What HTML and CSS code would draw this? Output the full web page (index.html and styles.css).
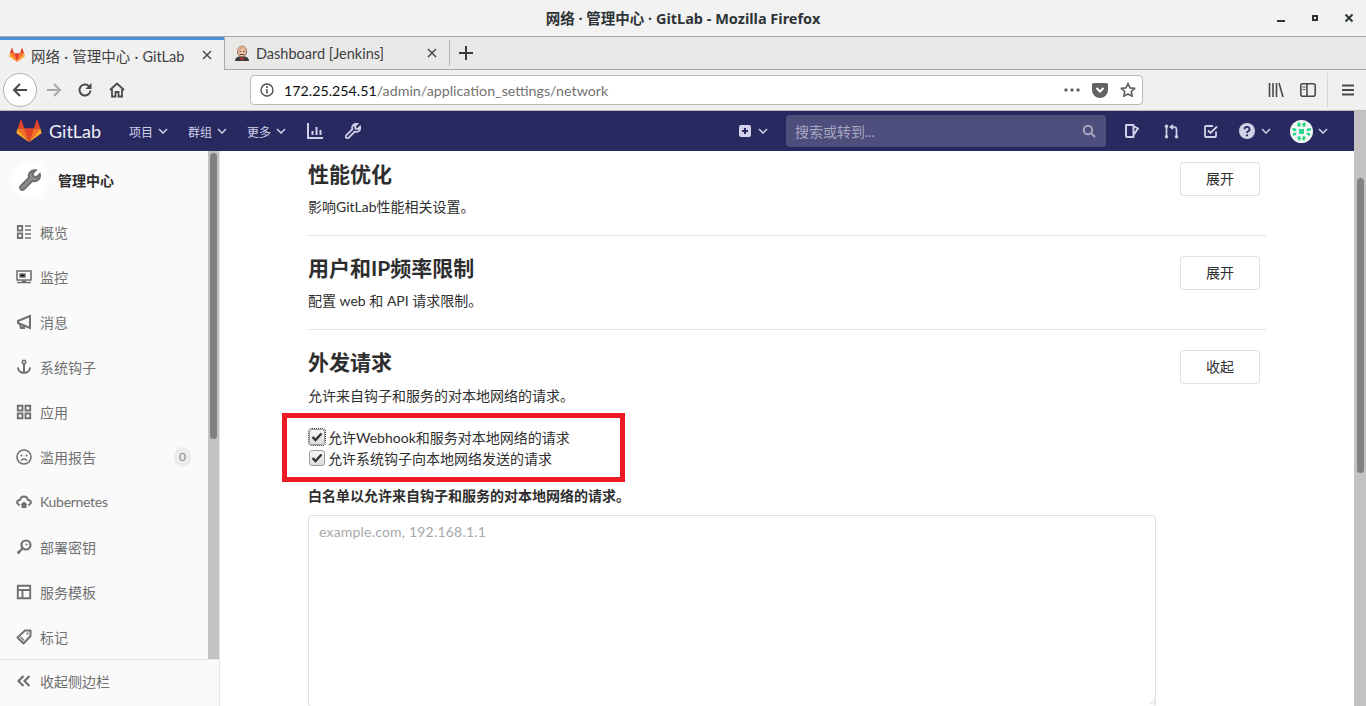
FILE: index.html
```html
<!DOCTYPE html>
<html lang="zh-CN">
<head>
    <meta charset="UTF-8">
    <title>网络 · 管理中心 · GitLab - Mozilla Firefox</title>
    <link rel="stylesheet" href="styles.css">
</head>
<body>
    <svg class="defs" width="0" height="0">
        <defs>
            <g id="tanuki">
                <path d="M18 33L24.700 13H11.300z" fill="#e24329"/>
                <path d="M18 33L11.300 13H2z" fill="#fc6d26"/>
                <path d="M2 13L.2 19c-.2.500 0 1.100.5 1.400L18 33z" fill="#fca326"/>
                <path d="M2 13h9.300L7.300 1c-.2-.6-1-.6-1.200 0z" fill="#e24329"/>
                <path d="M18 33l6.700-20H34z" fill="#fc6d26"/>
                <path d="M34 13l1.800 6c.2.500 0 1.100-.5 1.400L18 33z" fill="#fca326"/>
                <path d="M34 13h-9.300l4-12c.2-.6 1-.6 1.200 0z" fill="#e24329"/>
            </g>
            <path id="wrench" d="M11.200.8a4 4 0 0 0-3.800 5.400L1.200 12.400a1.500 1.500 0 0 0 0 2.200l.2.200a1.500 1.500 0 0 0 2.200 0l6.200-6.200a4 4 0 0 0 5.300-4.900l-2.300 2.300-2.300-.6-.6-2.300L12.200.9a4 4 0 0 0-1-.1z"/>
        </defs>
    </svg>

    <div class="titlebar">
        <span class="window-title">网络 · 管理中心 · GitLab - Mozilla Firefox</span>
        <div class="window-buttons">
            <svg width="10" height="10" viewBox="0 0 10 10"><rect x="1" y="7" width="8" height="2" fill="#2e3436"/></svg>
            <svg width="10" height="10" viewBox="0 0 10 10"><path d="M2 2h6v6H2z M4 4v2h2V4z" fill="#2e3436" fill-rule="evenodd"/></svg>
            <svg width="10" height="10" viewBox="0 0 10 10"><path d="M1.500 1.500l7 7M8.500 1.500l-7 7" stroke="#2e3436" stroke-width="2"/></svg>
        </div>
    </div>

    <div class="tabbar">
        <div class="tab tab-active">
            <svg class="tab-icon" width="16" height="16" viewBox="0 0 36 34"><use href="#tanuki"/></svg>
            <span class="tab-label">网络 · 管理中心 · GitLab</span>
            <svg class="tab-close" width="10" height="10" viewBox="0 0 10 10"><path d="M1 1l8 8M9 1l-8 8" stroke="#4a4a4c" stroke-width="1.500"/></svg>
        </div>
        <div class="tab tab-other">
            <svg class="tab-icon" width="16" height="16" viewBox="0 0 16 16">
                <path d="M1 16c0-3 2-4 4-4.500h6c2 .5 4 1.500 4 4.500z" fill="#3c3a3a"/>
                <path d="M7 12.500l1 1 1-1 1.500 1-1.500 1.300H7l-1.500-1.300z" fill="#c8352b"/>
                <ellipse cx="8" cy="6.500" rx="4.500" ry="5.500" fill="#eebfa0" stroke="#5b4a42" stroke-width=".8"/>
                <path d="M3.500 7C3 4 4.500 1 8 1c2.500 0 4 1.500 4 3-2-1.500-5-1-8.500 3z" fill="#d9a98a"/>
                <path d="M5.500 6.500h1.500M9 6.500h1.500M6 9.500h4" stroke="#3c3a3a" stroke-width=".9"/>
            </svg>
            <span class="tab-label">Dashboard [Jenkins]</span>
            <svg class="tab-close" width="10" height="10" viewBox="0 0 10 10"><path d="M1 1l8 8M9 1l-8 8" stroke="#4a4a4c" stroke-width="1.500"/></svg>
        </div>
        <div class="tab-sep"></div>
        <svg class="tab-new" width="14" height="14" viewBox="0 0 14 14"><path d="M7 0v14M0 7h14" stroke="#3a3a3c" stroke-width="2"/></svg>
    </div>

    <div class="toolbar">
        <div class="back-btn">
            <svg width="18" height="18" viewBox="0 0 18 18"><path d="M16 9H3M9 3L3 9l6 6" fill="none" stroke="#4a4a4c" stroke-width="2"/></svg>
        </div>
        <svg class="forward" width="18" height="18" viewBox="0 0 18 18"><path d="M2 9h13M9 3l6 6-6 6" fill="none" stroke="#a9a9aa" stroke-width="2"/></svg>
        <svg class="reload" width="16" height="16" viewBox="0 0 16 16"><path d="M13.500 8.500A5.500 5.500 0 1 1 12 4.200" fill="none" stroke="#4a4a4c" stroke-width="2"/><path d="M14.500 1v6h-6z" fill="#4a4a4c"/></svg>
        <svg class="home" width="16" height="16" viewBox="0 0 16 16"><path d="M1 8l7-6.500L15 8M3 7v7.500h3.500V10h3v4.500H13V7" fill="none" stroke="#4a4a4c" stroke-width="1.800"/></svg>
        <div class="urlbar">
            <svg class="url-info" width="14" height="14" viewBox="0 0 14 14"><circle cx="7" cy="7" r="6" fill="none" stroke="#4a4a4c" stroke-width="1.300"/><path d="M7 6v4.500" stroke="#4a4a4c" stroke-width="1.500"/><circle cx="7" cy="3.900" r="1" fill="#4a4a4c"/></svg>
            <span class="url"><span class="url-host">172.25.254.51</span>/admin/application_settings/network</span>
            <svg class="url-more" width="16" height="4" viewBox="0 0 16 4"><circle cx="2" cy="2" r="1.700" fill="#636366"/><circle cx="8" cy="2" r="1.700" fill="#636366"/><circle cx="14" cy="2" r="1.700" fill="#636366"/></svg>
            <svg class="url-pocket" width="16" height="15" viewBox="0 0 16 15"><path d="M1.500 0h13A1.500 1.500 0 0 1 16 1.500V7A8 8 0 0 1 0 7V1.500A1.500 1.500 0 0 1 1.500 0z" fill="#636366"/><path d="M4.500 5L8 8.500 11.500 5" fill="none" stroke="#fff" stroke-width="2"/></svg>
            <svg class="url-star" width="16" height="16" viewBox="0 0 16 16"><path d="M8 1.500l2 4.400 4.700.5-3.500 3.200 1 4.700L8 11.900l-4.200 2.400 1-4.700L1.300 6.400 6 5.900z" fill="none" stroke="#636366" stroke-width="1.700" stroke-linejoin="round"/></svg>
        </div>
        <svg class="library" width="16" height="16" viewBox="0 0 16 16"><path d="M1.500 1v14M5 1v14M8.500 1v14M11 1l4 14" stroke="#4a4a4c" stroke-width="1.600" fill="none"/></svg>
        <svg class="sidebar-toggle" width="16" height="14" viewBox="0 0 16 14"><rect x=".8" y=".8" width="14.400" height="12.400" rx="2" fill="none" stroke="#4a4a4c" stroke-width="1.600"/><path d="M7 1v12" stroke="#4a4a4c" stroke-width="1.600"/><path d="M2.500 4h3M2.500 6.500h3" stroke="#4a4a4c" stroke-width="1.200"/></svg>
        <div class="tool-sep"></div>
        <svg class="tool-menu" width="14" height="12" viewBox="0 0 14 12"><path d="M1 1.500h12M1 6h12M1 10.500h12" stroke="#4a4a4c" stroke-width="2"/></svg>
    </div>

    <div class="viewport">
        <div class="app">
            <header class="navbar">
                <svg class="nav-logo" width="26" height="24" viewBox="0 0 36 34"><use href="#tanuki"/></svg>
                <span class="nav-brand">GitLab</span>
                <a class="nav-link">项目<svg class="chev" width="10" height="6" viewBox="0 0 10 6"><path d="M1 1l4 4 4-4"/></svg></a>
                <a class="nav-link">群组<svg class="chev" width="10" height="6" viewBox="0 0 10 6"><path d="M1 1l4 4 4-4"/></svg></a>
                <a class="nav-link">更多<svg class="chev" width="10" height="6" viewBox="0 0 10 6"><path d="M1 1l4 4 4-4"/></svg></a>
                <svg class="nav-chart" width="16" height="16" viewBox="0 0 16 16"><path d="M1 0v15h15" fill="none" stroke="#d1d0e8" stroke-width="2"/><path d="M5.500 8v4M9.500 4v8M13.500 7v5" stroke="#d1d0e8" stroke-width="2"/></svg>
                <svg class="nav-wrench" width="16" height="16" viewBox="0 0 16 16"><use href="#wrench" fill="none" stroke="#d1d0e8" stroke-width="1.800"/></svg>

                <div class="nav-right">
                    <svg class="nav-plus" width="12" height="12" viewBox="0 0 12 12"><path d="M2 0h8a2 2 0 0 1 2 2v8a2 2 0 0 1-2 2H2a2 2 0 0 1-2-2V2a2 2 0 0 1 2-2zM5 3v2H3v2h2v2h2V7h2V5H7V3z" fill="#d1d0e8" fill-rule="evenodd"/></svg>
                    <svg class="chev chev-plus" width="10" height="6" viewBox="0 0 10 6"><path d="M1 1l4 4 4-4"/></svg>
                    <div class="search">
                        <span>搜索或转到...</span>
                        <svg width="14" height="14" viewBox="0 0 14 14"><circle cx="6" cy="6" r="4.200" fill="none" stroke="#a8a7c0" stroke-width="2"/><path d="M9 9l4 4" stroke="#a8a7c0" stroke-width="2"/></svg>
                    </div>
                    <svg class="nav-issue" width="14" height="14" viewBox="0 0 14 14"><path d="M1 1h7.500v12H2a1 1 0 0 1-1-1zM8.500 2L13 4.500 8.500 11" fill="none" stroke="#d1d0e8" stroke-width="2" stroke-linejoin="round"/></svg>
                    <svg class="nav-mr" width="15" height="15" viewBox="0 0 15 15"><path d="M2.500 3v9M9 1L6.500 3 9 5M7 3h3a2.500 2.500 0 0 1 2.500 2.500V12" fill="none" stroke="#d1d0e8" stroke-width="1.700"/><circle cx="2.500" cy="2.300" r="1.700" fill="#d1d0e8"/><circle cx="2.500" cy="12.700" r="1.700" fill="#d1d0e8"/><circle cx="12.500" cy="12.700" r="1.700" fill="#d1d0e8"/></svg>
                    <svg class="nav-todo" width="14" height="14" viewBox="0 0 14 14"><path d="M12 7.500V12a1 1 0 0 1-1 1H2a1 1 0 0 1-1-1V3a1 1 0 0 1 1-1h7" fill="none" stroke="#d1d0e8" stroke-width="1.800"/><path d="M4 6.500l2.500 2.500L13 2.500" fill="none" stroke="#d1d0e8" stroke-width="1.800"/></svg>
                    <svg class="nav-help" width="16" height="16" viewBox="0 0 16 16"><circle cx="8" cy="8" r="8" fill="#d1d0e8"/><path d="M5.500 6.200a2.500 2.300 0 1 1 3.600 2.100c-.8.400-1.100.8-1.100 1.700" fill="none" stroke="#292961" stroke-width="1.800"/><circle cx="8" cy="12.300" r="1.100" fill="#292961"/></svg>
                    <svg class="chev chev-help" width="10" height="6" viewBox="0 0 10 6"><path d="M1 1l4 4 4-4"/></svg>
                    <svg class="avatar" width="23" height="23" viewBox="0 0 23 23">
                        <circle cx="11.500" cy="11.500" r="11.500" fill="#f2f7f4"/>
                        <path d="M8 2l3 2-1 3-3-1zM15 2l1 4-3 1-1-3zM2 8l4 .5.5 2.500L3 11zM21 8l-4 .5-.5 2.500 4 0zM9 9h5v5H9zM3 13l3.500-.5L6 15l-3 1zM20 13l-3.500-.5.500 2.500 3 1zM7 17l3-1 1 3-2 2zM16 17l-3-1-1 3 2 2z" fill="#2bd68e"/>
                    </svg>
                    <svg class="chev chev-avatar" width="10" height="6" viewBox="0 0 10 6"><path d="M1 1l4 4 4-4"/></svg>
                </div>
            </header>

            <div class="page">
                <aside class="sidebar">
                    <div class="side-scroll">
                        <div class="side-head">
                            <div class="side-avatar">
                                <svg width="22" height="22" viewBox="0 0 16 16"><use href="#wrench" fill="#8c8c8c" stroke="#6e6e6e" stroke-width="1.400"/></svg>
                            </div>
                            <span>管理中心</span>
                        </div>
                        <ul class="side-list">
                            <li><svg viewBox="0 0 16 16"><path d="M1.800 2h4.400v4.500H1.800zM1.800 9.500h4.400V14H1.800z" fill="none" stroke="#707070" stroke-width="1.800"/><path d="M9 2h6M9 6h6M9 10h6M9 14h6" stroke="#707070" stroke-width="1.600"/></svg>概览</li>
                            <li><svg viewBox="0 0 16 16"><path d="M1 2h14v9H1z" fill="none" stroke="#707070" stroke-width="1.600"/><path d="M4 5h5v3H4zM1 13.500h14" stroke="#707070" stroke-width="1.400"/><path d="M6 11h4v2H6z" fill="#707070"/></svg>监控</li>
                            <li><svg viewBox="0 0 16 16"><path d="M14 2L2 7v2l12 5zM4 10l1 4h3l-1-3" fill="none" stroke="#707070" stroke-width="2"/></svg>消息</li>
                            <li><svg viewBox="0 0 16 16"><circle cx="8" cy="3" r="1.700" fill="none" stroke="#707070" stroke-width="1.600"/><path d="M8 5v9M2 8.500c0 7 12 7 12 0" fill="none" stroke="#707070" stroke-width="2"/></svg>系统钩子</li>
                            <li><svg viewBox="0 0 16 16"><path d="M1.800 1.800h4.700v4.700H1.800zM9.500 1.800h4.700v4.700H9.500zM1.800 9.500h4.700v4.700H1.800zM9.500 9.500h4.700v4.700H9.500z" fill="none" stroke="#707070" stroke-width="1.900"/></svg>应用</li>
                            <li><svg viewBox="0 0 16 16"><circle cx="8" cy="8" r="7" fill="none" stroke="#707070" stroke-width="1.600"/><circle cx="5.500" cy="6.500" r="1" fill="#707070"/><circle cx="10.500" cy="6.500" r="1" fill="#707070"/><path d="M5 11.500c1.500-2 4.500-2 6 0" fill="none" stroke="#707070" stroke-width="1.400"/></svg>滥用报告<span class="count">0</span></li>
                            <li><svg viewBox="0 0 16 16"><path d="M3.500 11.500L1 9c0-1.500 1-3 3-3 .5-2 2-3.500 4-3.500s3.500 1.500 4 3.500c2 0 3 1.500 3 3l-2.500 2.500" fill="none" stroke="#707070" stroke-width="1.800"/><path d="M8 7.500l3.500 3-1 .5v3h-5v-3l-1-.5z" fill="#707070"/></svg><span class="kube">Kubernetes</span></li>
                            <li><svg viewBox="0 0 16 16"><circle cx="10" cy="6" r="4.500" fill="none" stroke="#707070" stroke-width="2.200"/><path d="M7 9l-5.500 5.500M2 12l2 2" stroke="#707070" stroke-width="2.200"/><circle cx="10.500" cy="5.500" r="1" fill="#707070"/></svg>部署密钥</li>
                            <li><svg viewBox="0 0 16 16"><path d="M1.800 1.800h12.400v12.400H1.800zM1.800 6h12.400M6.500 6v8" fill="none" stroke="#707070" stroke-width="1.900"/></svg>服务模板</li>
                            <li><svg viewBox="0 0 16 16"><path d="M9 1.500h5.500V7L7.500 14.500 1.500 8.500z" fill="none" stroke="#707070" stroke-width="2" stroke-linejoin="round"/><circle cx="11.500" cy="4.500" r="1.100" fill="#707070"/><path d="M4.500 8l3.500 3.500" stroke="#707070" stroke-width="1.200"/></svg>标记</li>
                        </ul>
                    </div>
                    <div class="side-collapse">
                        <svg viewBox="0 0 16 16"><path d="M7.500 3L2.500 8l5 5M13.500 3l-5 5 5 5" fill="none" stroke="#707070" stroke-width="2.200"/></svg>收起侧边栏
                    </div>
                    <div class="side-scrollbar"><div class="side-thumb"></div></div>
                </aside>

                <main class="content">
                    <section class="block block-first">
                        <div class="block-text">
                            <h4>性能优化</h4>
                            <p>影响GitLab性能相关设置。</p>
                        </div>
                        <button class="btn">展开</button>
                    </section>
                    <section class="block">
                        <div class="block-text">
                            <h4>用户和IP频率限制</h4>
                            <p>配置 web 和 API 请求限制。</p>
                        </div>
                        <button class="btn">展开</button>
                    </section>
                    <section class="block block-open">
                        <div class="block-head">
                            <div class="block-text">
                                <h4>外发请求</h4>
                                <p>允许来自钩子和服务的对本地网络的请求。</p>
                            </div>
                            <button class="btn">收起</button>
                        </div>
                        <div class="checks">
                            <label class="check"><span class="box box-focus"><svg width="12" height="10" viewBox="0 0 12 10"><path d="M1.500 5l3 3 6-6.500" fill="none" stroke="#2e3436" stroke-width="2.400"/></svg></span>允许Webhook和服务对本地网络的请求</label>
                            <label class="check"><span class="box"><svg width="12" height="10" viewBox="0 0 12 10"><path d="M1.500 5l3 3 6-6.500" fill="none" stroke="#2e3436" stroke-width="2.400"/></svg></span>允许系统钩子向本地网络发送的请求</label>
                        </div>
                        <div class="whitelist-label">白名单以允许来自钩子和服务的对本地网络的请求。</div>
                        <div class="whitelist">example.com, 192.168.1.1</div>
                    </section>
                    <div class="callout"></div>
                    <svg class="resizer" width="8" height="8" viewBox="0 0 8 8"><path d="M7 1L1 7M7 4L4 7" stroke="#aaa" stroke-width="1" stroke-dasharray="1 1"/></svg>
                </main>
            </div>
        </div>

        <div class="page-scrollbar"><div class="page-thumb"></div></div>
    </div>
</body>
</html>
```

FILE: styles.css
```css
* {
    margin: 0;
    padding: 0;
    box-sizing: border-box;
}

html, body {
    height: 100%;
    overflow: hidden;
}

body {
    display: flex;
    flex-direction: column;
    font-family: "Lato", "Noto Sans CJK SC", sans-serif;
    font-size: 14px;
    color: #2e2e2e;
    background: #fff;
}

.defs {
    position: absolute;
}

/* window title */
.titlebar {
    height: 37px;
    flex: none;
    display: flex;
    align-items: center;
    justify-content: center;
    position: relative;
    background: #f2f2f2;
    border-bottom: 1px solid #a8a8a4;
}

.window-title {
    font-family: "Noto Sans", "Noto Sans CJK SC", sans-serif;
    font-size: 14.500px;
    font-weight: 700;
    color: #2e3436;
    padding-bottom: 1px;
}

.window-buttons {
    position: absolute;
    right: 12px;
    top: 13px;
    display: flex;
    gap: 24px;
}

/* tabs */
.tabbar {
    height: 33px;
    flex: none;
    display: flex;
    align-items: stretch;
    background: #e8e8e7;
    border-bottom: 1px solid #a8a8a4;
}

.tab {
    display: flex;
    align-items: center;
    font-size: 14.500px;
    color: #3f3f42;
    padding: 0 11px 0 9px;
}

.tab-active {
    width: 224px;
    height: 33px;
    background: #f0f0f0;
    border-top: 3px solid #4a90d9;
    word-spacing: .5px;
    position: relative;
    z-index: 1;
}

.tab-other {
    width: 225px;
    background: #e8e8e7;
    border-left: 1px solid #a8a8a4;
}

.tab-icon {
    flex: none;
    margin-right: 6px;
}

.tab-label {
    flex: 1;
    white-space: nowrap;
    overflow: hidden;
}

.tab-close {
    flex: none;
    margin-right: 1px;
}

.tab-sep {
    width: 1px;
    height: 26px;
    margin: 3px 0;
    background: #b4b4b2;
}

.tab-new {
    align-self: center;
    margin-left: 9px;
}

/* address bar */
.toolbar {
    height: 41px;
    flex: none;
    display: flex;
    align-items: center;
    background: #f0f0f0;
    border-bottom: 1px solid #b9b9b6;
}

.back-btn {
    width: 34px;
    height: 34px;
    margin-left: 3px;
    display: flex;
    align-items: center;
    justify-content: center;
    background: #fff;
    border: 1px solid #b1b1b1;
    border-radius: 50%;
}

.forward {
    margin-left: 8px;
}

.reload {
    margin-left: 14px;
}

.home {
    margin-left: 16px;
}

.urlbar {
    width: 893px;
    height: 30px;
    margin-left: 125px;
    display: flex;
    align-items: center;
    background: #fff;
    border: 1px solid #b9b9b6;
    border-radius: 4px;
    padding: 0 6px 0 9px;
}

.url {
    flex: 1;
    margin-left: 10px;
    font-size: 14.250px;
    color: #737373;
    white-space: nowrap;
}

.url-host {
    color: #111;
}

.url-pocket {
    margin-left: 12px;
}

.url-star {
    margin-left: 12px;
}

.library {
    margin-left: 125px;
}

.sidebar-toggle {
    margin-left: 16px;
}

.tool-sep {
    width: 1px;
    height: 34px;
    margin-left: 11px;
    background: #d6d6d4;
}

.tool-menu {
    margin-left: 13px;
}

/* everything under the toolbar, with the page scrollbar at its right */
.viewport {
    flex: 1;
    min-height: 0;
    display: flex;
}

.app {
    flex: 1;
    min-width: 0;
    display: flex;
    flex-direction: column;
}

/* gitlab header */
.navbar {
    height: 40px;
    flex: none;
    display: flex;
    align-items: center;
    background: #292961;
    color: #d1d0e8;
    padding-left: 16px;
}

.nav-logo {
    flex: none;
}

.nav-brand {
    margin-left: 7px;
    font-size: 18px;
    color: #f0f0f8;
    width: 70px;
}

.nav-link {
    display: flex;
    align-items: center;
    gap: 5px;
    font-size: 12px;
    margin: 0 10px;
}

.chev {
    flex: none;
    fill: none;
    stroke: #d1d0e8;
    stroke-width: 1.500;
}

.nav-chart {
    margin-left: 11px;
}

.nav-wrench {
    margin-left: 22px;
}

.nav-right {
    margin-left: auto;
    display: flex;
    align-items: center;
    padding-right: 26px;
}

.chev-plus {
    margin-left: 7px;
}

.search {
    width: 320px;
    height: 32px;
    margin-left: 18px;
    display: flex;
    align-items: center;
    justify-content: space-between;
    background: #4e4e7d;
    border-radius: 4px;
    padding: 0 10px 0 9px;
    font-size: 14px;
    color: #a8a7c0;
}

.nav-issue {
    margin-left: 19px;
}

.nav-mr {
    margin-left: 25px;
}

.nav-todo {
    margin-left: 25px;
}

.nav-help {
    margin-left: 21px;
}

.chev-help {
    margin-left: 6px;
}

.avatar {
    margin-left: 19px;
}

.chev-avatar {
    margin-left: 5px;
}

/* page below the gitlab header */
.page {
    flex: 1;
    min-height: 0;
    display: flex;
    overflow: hidden;
}

.sidebar {
    width: 220px;
    flex: none;
    position: relative;
    display: flex;
    flex-direction: column;
    background: #fafafa;
    border-right: 1px solid #e5e5e5;
}

.side-scroll {
    flex: 1;
    min-height: 0;
    overflow: hidden;
    padding-right: 11px;
}

.side-head {
    height: 60px;
    display: flex;
    align-items: center;
    padding: 0 0 2px 11px;
    gap: 9px;
    font-size: 14px;
    font-weight: 700;
    color: #2e2e2e;
}

.side-avatar {
    width: 38px;
    height: 38px;
    display: flex;
    align-items: center;
    justify-content: center;
    background: #fff;
    border-radius: 50%;
}

.side-list {
    list-style: none;
    margin-top: -2px;
}

.side-list li {
    height: 45px;
    display: flex;
    align-items: center;
    padding-left: 16px;
    font-size: 14px;
    color: #707070;
}

.side-list svg, .side-collapse svg {
    width: 16px;
    height: 16px;
    flex: none;
    margin-right: 8px;
}

.kube {
    letter-spacing: -.3px;
}

.count {
    width: 17px;
    height: 20px;
    margin-left: auto;
    margin-right: 17px;
    display: flex;
    align-items: center;
    justify-content: center;
    background: #ececec;
    border-radius: 9px;
    font-size: 12px;
    color: #888;
}

.side-collapse {
    height: 47px;
    flex: none;
    display: flex;
    align-items: center;
    padding: 0 0 5px 16px;
    position: relative;
    z-index: 1;
    background: #fafafa;
    border-top: 1px solid #e5e5e5;
    font-size: 14px;
    color: #707070;
}

.side-scrollbar {
    position: absolute;
    top: 0;
    right: 0;
    bottom: 0;
    width: 11px;
    background: #c1c2c1;
}

.side-thumb {
    width: 7px;
    height: 286px;
    margin: 2px 0 0 2px;
    background: #7f8281;
    border-radius: 4px;
}

.content {
    flex: 1;
    min-width: 0;
    position: relative;
    overflow: hidden;
    padding: 0 88px;
}

.block {
    height: 94px;
    display: flex;
    justify-content: space-between;
    border-bottom: 1px solid #e5e5e5;
    padding-right: 6px;
}

.block h4 {
    font-size: 21px;
    line-height: 28px;
    font-weight: 700;
    color: #2e2e2e;
    margin-top: 18px;
}

.block p {
    margin-top: 9px;
    font-size: 14px;
    line-height: 20px;
    color: #2e2e2e;
}

.btn {
    width: 80px;
    height: 34px;
    margin-top: 20px;
    padding-bottom: 2px;
    background: #fff;
    border: 1px solid #dfdfdf;
    border-radius: 3px;
    font: inherit;
    font-size: 14px;
    color: #2e2e2e;
}

.block-first {
    height: 85px;
}

.block-first h4 {
    margin-top: 9px;
}

.block-first .btn {
    margin-top: 11px;
}

.block-open {
    display: block;
    height: auto;
    border-bottom: 0;
    padding-right: 0;
}

.block-open p {
    margin-top: 10px;
}

.block-head {
    display: flex;
    justify-content: space-between;
    padding-right: 6px;
}

.checks {
    margin-top: 20px;
}

.check {
    height: 21px;
    display: flex;
    align-items: center;
    font-size: 14px;
    color: #2e2e2e;
}

.box {
    width: 16px;
    height: 16px;
    flex: none;
    margin: 0 3px 0 1px;
    display: flex;
    align-items: center;
    justify-content: center;
    background: linear-gradient(#f6f6f5, #dcdcda);
    border: 1px solid #9d9d9a;
    border-radius: 3px;
}

.box-focus {
    outline: 1px dotted #2e3436;
    outline-offset: 0;
}

.whitelist-label {
    margin-top: 19px;
    font-size: 14px;
    line-height: 18px;
    font-weight: 700;
    color: #2e2e2e;
}

.whitelist {
    width: 848px;
    height: 192px;
    margin-top: 10px;
    padding: 6px 10px;
    border: 1px solid #dfdfdf;
    border-radius: 3px;
    font-size: 14px;
    line-height: 20px;
    letter-spacing: .2px;
    color: #a8a8a8;
}

/* red annotation box drawn over the two checkboxes */
.callout {
    position: absolute;
    left: 62px;
    top: 262px;
    width: 343px;
    height: 69px;
    border: 5px solid #ed1c24;
}

.resizer {
    position: absolute;
    left: 928px;
    bottom: 0;
}

.page-scrollbar {
    width: 12px;
    flex: none;
    background: #c1c2c1;
}

.page-thumb {
    width: 7px;
    height: 295px;
    margin: 67px 0 0 3px;
    background: #7f8281;
    border-radius: 4px;
}
```
